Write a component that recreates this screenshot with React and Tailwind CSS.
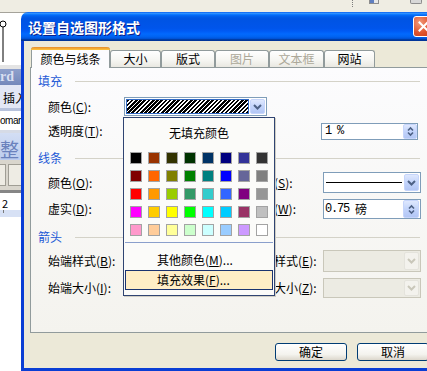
import React from "react";

const swatches = [
  "#000000", "#993300", "#333300", "#003300", "#003366", "#000080", "#333399", "#333333",
  "#800000", "#FF6600", "#808000", "#008000", "#008080", "#0000FF", "#666699", "#808080",
  "#FF0000", "#FF9900", "#99CC00", "#339966", "#33CCCC", "#3366FF", "#800080", "#969696",
  "#FF00FF", "#FFCC00", "#FFFF00", "#00FF00", "#00FFFF", "#00CCFF", "#993366", "#C0C0C0",
  "#FF99CC", "#FFCC99", "#FFFF99", "#CCFFCC", "#CCFFFF", "#99CCFF", "#CC99FF", "#FFFFFF",
];

function K({ children }) {
  return <span className="underline underline-offset-[1px]">{children}</span>;
}

function Chevron({ color = "#4d6185" }) {
  return (
    <svg width="9" height="6" viewBox="0 0 9 6">
      <path d="M1 1 L4.5 4.5 L8 1" fill="none" stroke={color} strokeWidth="2" />
    </svg>
  );
}

function SpinGlyph() {
  return (
    <svg width="7" height="11" viewBox="0 0 7 11">
      <path d="M1 4.5 L3.5 2 L6 4.5" fill="none" stroke="#4d6185" strokeWidth="1.6" />
      <path d="M1 6.5 L3.5 9 L6 6.5" fill="none" stroke="#4d6185" strokeWidth="1.6" />
    </svg>
  );
}

function ArrowBtn() {
  return (
    <div className="w-[15px] h-full shrink-0 rounded-[2px] border border-[#c6d5fb] bg-[linear-gradient(180deg,#dfe8fe,#c3d4fb_50%,#b2c6f5)] flex items-center justify-center">
      <Chevron />
    </div>
  );
}

function DisabledCombo() {
  return (
    <div className="w-[98px] h-full border border-[#c9c7ba] bg-[#ecebe3] flex p-[1px]">
      <div className="flex-1" />
      <div className="w-[15px] h-full rounded-[2px] border border-[#e4e3dc] bg-[#f3f2ed] flex items-center justify-center">
        <Chevron color="#c9c7ba" />
      </div>
    </div>
  );
}

function Header({ children, className = "" }) {
  return (
    <div className={`flex items-center h-[16px] pl-[7px] pr-[9px] shrink-0 ${className}`}>
      <span className="text-[#1e5ad6] shrink-0">{children}</span>
      <div className="flex-1 h-px bg-[#d4d2c8] ml-[13px]" />
    </div>
  );
}

function Tab({ w, label, disabled }) {
  return (
    <div
      className={`${w} h-[17px] shrink-0 border-t border-x border-[#919b9c] rounded-t-[3px] bg-[linear-gradient(180deg,#ffffff,#f5f5f1_60%,#e9e8e1)] flex items-center justify-center ${
        disabled ? "text-[#aca899]" : "text-black"
      }`}
    >
      {label}
    </div>
  );
}

function WordBackground() {
  return (
    <div className="flex flex-col w-full h-full">
      <div className="h-[13px] shrink-0 bg-[#efede3] border-b border-[#a5a39a] flex items-start justify-end pr-[5px]">
        <div className="w-px h-[7px] border-l border-dotted border-[#7c7c7c]" />
        <div className="ml-[16px] w-[10px] h-[4px] border border-t-0 border-[#8d8d8d] bg-[linear-gradient(90deg,#5f7fc0_50%,#e8e8e8_50%)]" />
        <div className="ml-[31px] w-[12px] h-[4px] rounded-b-[2px] border border-t-0 border-[#8d8d8d] bg-[#d8d8d8]" />
      </div>
      <div className="h-[52px] shrink-0 bg-white">
        <svg width="21" height="52" viewBox="0 0 21 52">
          <circle cx="3" cy="11" r="3" fill="white" stroke="black" strokeWidth="1" />
          <line x1="3" y1="14" x2="3" y2="49" stroke="black" strokeWidth="1" />
        </svg>
      </div>
      <div className="h-[4px] shrink-0 bg-[#e4e4e4]" />
      <div className="h-[16px] shrink-0 bg-[linear-gradient(180deg,#8fa1cc,#7488bb)] flex items-center overflow-hidden">
        <span className="font-['Liberation_Serif',serif] font-bold text-[14px] leading-none text-[#d9dff1]">rd</span>
      </div>
      <div className="h-[23px] shrink-0 bg-[#e3e7f5] flex items-center pl-[3px] pt-[3px] overflow-hidden whitespace-nowrap">
        插入
      </div>
      <div className="h-[3px] shrink-0 bg-[#b7c2dc]" />
      <div className="h-[19px] shrink-0 bg-white flex items-center overflow-hidden whitespace-nowrap">
        <span className="font-['Liberation_Sans',sans-serif] text-[10px] tracking-[-0.5px]">oman</span>
      </div>
      <div className="h-[3px] shrink-0 bg-[#d6dbe6]" />
      <div className="h-[27px] shrink-0 bg-[linear-gradient(180deg,#d3def4,#bccdee)] flex items-center whitespace-nowrap pt-[3px]">
        <span className="text-[19px] leading-none text-[#6a82bd]">整</span>
        <span className="text-[8px] leading-none text-[#6a82bd] ml-[2px]">▾</span>
      </div>
      <div className="h-[30px] shrink-0 bg-[#d9d6cd] flex items-center gap-[2px]">
        <div className="w-[6px] h-[22px] border border-l-0 border-[#a09e95] bg-[#eeece4]" />
        <div className="w-[14px] h-[22px] border border-[#a09e95] bg-[#eeece4]" />
      </div>
      <div className="h-[3px] shrink-0 bg-[#868686]" />
      <div className="h-[17px] shrink-0 bg-white flex items-center pl-[2px] pt-[4px]">
        <span className="text-[11px] leading-none">2</span>
      </div>
      <div className="h-[7px] shrink-0 bg-[#d7e1f5] flex items-start pl-[3px]">
        <div className="w-px h-[3px] bg-[#7a7a7a]" />
      </div>
      <div className="flex-1 bg-white" />
    </div>
  );
}

function Popup() {
  return (
    <div className="absolute left-[92px] top-[49px] w-[152px] border border-[#2f4472] bg-[#fbfbf9] flex flex-col shadow-[1px_1px_0_#cfcdc3]">
      <div className="h-[18px] mt-[6px] flex items-center justify-center">无填充颜色</div>
      <div className="grid grid-cols-[repeat(8,12px)] gap-[6px] mt-[10px] ml-[6px]">
        {swatches.map((c, i) => (
          <div key={i} className="w-[12px] h-[12px] border border-[#a3a3a3]" style={{ backgroundColor: c }} />
        ))}
      </div>
      <div className="h-px bg-[#8a9fcc] mx-[1px] mt-[6px]" />
      <div className="h-[19px] mt-[7px] flex items-center pl-[33px] whitespace-nowrap">
        其他颜色(<K>M</K>)...
      </div>
      <div className="h-[20px] mt-[1px] mx-[1px] border border-[#1c3470] bg-[#ffeec6] flex items-center pl-[31px] whitespace-nowrap">
        填充效果(<K>F</K>)...
      </div>
      <div className="h-[5px]" />
    </div>
  );
}

function Panel() {
  return (
    <div className="relative w-[400px] h-[266px] shrink-0 border border-[#919b9c] bg-[linear-gradient(180deg,#fcfcfe,#f4f3ee)] flex flex-col pt-[5px]">
      <Header>填充</Header>

      <div className="flex items-center h-[19px] mt-[8px] shrink-0">
        <div className="w-[93px] pl-[17px] shrink-0 whitespace-nowrap">颜色(<K>C</K>):</div>
        <div className="w-[143px] h-full border border-[#7f9db9] bg-white flex p-[1px] gap-[1px]">
          <div className="flex-1 bg-[#316ac5] p-[1px]">
            <div className="h-full bg-[repeating-linear-gradient(135deg,#000_0px,#000_1.8px,#fff_1.8px,#fff_3px)]" />
          </div>
          <ArrowBtn />
        </div>
      </div>

      <div className="flex items-center h-[18px] mt-[6px] shrink-0">
        <div className="w-[93px] pl-[17px] shrink-0 whitespace-nowrap">透明度(<K>T</K>):</div>
        <div className="w-[197px] shrink-0" />
        <div className="w-[97px] h-[17px] border border-[#7f9db9] bg-white flex items-center pl-[3px]">
          <span className="font-['Liberation_Mono',monospace] text-[12px] tracking-[-1.2px] leading-none">1 %</span>
          <div className="flex-1" />
          <div className="w-[14px] h-[15px] rounded-[2px] border border-[#c6d5fb] bg-[linear-gradient(180deg,#dfe8fe,#c3d4fb_50%,#b2c6f5)] flex items-center justify-center">
            <SpinGlyph />
          </div>
        </div>
      </div>

      <Header className="mt-[10px]">线条</Header>

      <div className="flex items-center h-[21px] mt-[6px] shrink-0">
        <div className="w-[93px] pl-[17px] shrink-0 whitespace-nowrap">颜色(<K>O</K>):</div>
        <div className="w-[126px] shrink-0" />
        <div className="w-[73px] shrink-0 whitespace-nowrap">样式(<K>S</K>):</div>
        <div className="w-[98px] h-full border border-[#7f9db9] bg-white flex p-[1px] gap-[1px]">
          <div className="flex-1 flex items-center pl-[1px] pr-[1px]">
            <div className="h-px w-full bg-black" />
          </div>
          <ArrowBtn />
        </div>
      </div>

      <div className="flex items-center h-[20px] mt-[6px] shrink-0">
        <div className="w-[93px] pl-[17px] shrink-0 whitespace-nowrap">虚实(<K>D</K>):</div>
        <div className="w-[126px] shrink-0" />
        <div className="w-[73px] shrink-0 whitespace-nowrap">粗细(<K>W</K>):</div>
        <div className="w-[98px] h-full border border-[#7f9db9] bg-white flex items-center pl-[1px] pr-[1px]">
          <span className="font-['Liberation_Mono',monospace] text-[12px] tracking-[-1.2px] leading-none whitespace-pre">0.75 </span>
          <span className="leading-none">磅</span>
          <div className="flex-1" />
          <div className="w-[16px] h-[18px] rounded-[2px] border border-[#c6d5fb] bg-[linear-gradient(180deg,#dfe8fe,#c3d4fb_50%,#b2c6f5)] flex items-center justify-center">
            <SpinGlyph />
          </div>
        </div>
      </div>

      <Header className="mt-[10px]">箭头</Header>

      <div className="flex items-center h-[22px] mt-[5px] shrink-0">
        <div className="w-[93px] pl-[17px] shrink-0 whitespace-nowrap">始端样式(<K>B</K>):</div>
        <div className="w-[126px] shrink-0" />
        <div className="w-[73px] shrink-0 whitespace-nowrap">末端样式(<K>E</K>):</div>
        <DisabledCombo />
      </div>

      <div className="flex items-center h-[20px] mt-[6px] shrink-0">
        <div className="w-[93px] pl-[17px] shrink-0 whitespace-nowrap">始端大小(<K>I</K>):</div>
        <div className="w-[126px] shrink-0" />
        <div className="w-[73px] shrink-0 whitespace-nowrap">末端大小(<K>Z</K>):</div>
        <DisabledCombo />
      </div>

      <Popup />
    </div>
  );
}

function XPButton({ children }) {
  return (
    <button className="w-[72px] h-[18px] rounded-[3px] border border-[#003c74] bg-[linear-gradient(180deg,#ffffff,#f4f3ee_65%,#dcd7cc)] flex items-center justify-center text-[12px] leading-none text-black">
      {children}
    </button>
  );
}

function Dialog() {
  return (
    <div className="absolute left-[21px] top-[12px] w-[418px] h-[359px] flex flex-col">
      <div className="h-[29px] shrink-0 rounded-t-[7px] bg-[linear-gradient(180deg,#0058ee_0%,#3593ff_4%,#288eff_6%,#127dff_8%,#036ffc_10%,#0262ee_14%,#0057e5_20%,#0054e3_24%,#0055eb_56%,#005bf5_66%,#026afe_76%,#0062ef_86%,#0052d6_92%,#0040ab_94%,#003092_100%)] flex items-center pl-[7px] pr-[5px]">
        <span className="flex-1 text-white font-bold text-[14px] leading-none whitespace-nowrap [text-shadow:1px_1px_0_#0a1e8a]">
          设置自选图形格式
        </span>
        <div className="w-[21px] h-[21px] rounded-[3px] border border-white bg-[radial-gradient(circle_at_30%_30%,#f19a7c,#e0532c_55%,#c53b18)] flex items-center justify-center">
          <svg width="11" height="11" viewBox="0 0 11 11">
            <path d="M1.5 1.5 L9.5 9.5 M9.5 1.5 L1.5 9.5" stroke="white" strokeWidth="2" strokeLinecap="square" />
          </svg>
        </div>
      </div>
      <div className="flex-1 flex flex-col bg-[#ece9d8] border-l-[3px] border-r-[3px] border-b-[3px] border-[#0a3ed4] pt-[6px] pl-[6px] pr-[6px]">
        <div className="flex items-end h-[20px] pl-[1px] shrink-0">
          <div className="relative z-10 w-[79px] h-[21px] -mb-px shrink-0 bg-[#fcfcfe] border-x border-[#919b9c] rounded-t-[3px] flex flex-col">
            <div className="h-[3px] -mx-px rounded-t-[3px] bg-[linear-gradient(180deg,#e68b2c,#ffc73c)]" />
            <div className="flex-1 flex items-center justify-center whitespace-nowrap">颜色与线条</div>
          </div>
          <Tab w="w-[51px]" label="大小" />
          <Tab w="w-[54px]" label="版式" />
          <Tab w="w-[54px]" label="图片" disabled />
          <Tab w="w-[55px]" label="文本框" disabled />
          <Tab w="w-[51px]" label="网站" />
        </div>
        <Panel />
        <div className="flex justify-end gap-[10px] pr-[1px] mt-[10px]">
          <XPButton>确定</XPButton>
          <XPButton>取消</XPButton>
        </div>
      </div>
    </div>
  );
}

export default function App() {
  return (
    <div className="relative w-[427px] h-[371px] overflow-hidden bg-white font-['Noto_Sans_CJK_SC','Noto_Sans',sans-serif] text-[12px] text-black">
      <WordBackground />
      <Dialog />
    </div>
  );
}
